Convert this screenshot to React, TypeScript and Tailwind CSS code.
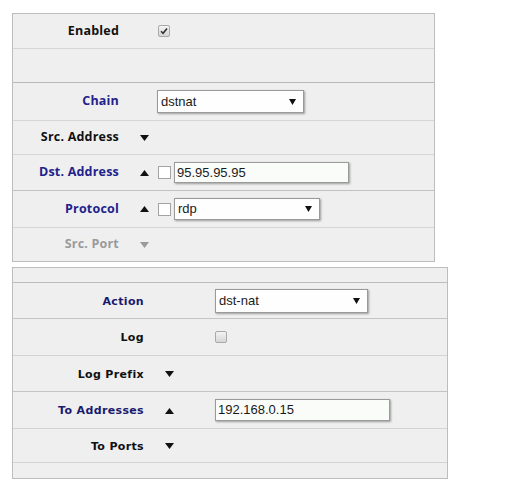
import React from 'react'

type Arrow = 'up' | 'down' | 'down-muted' | null

function Tri({ dir, muted }: { dir: 'up' | 'down'; muted?: boolean }) {
  const fill = muted ? '#9a9a9a' : '#111'
  return (
    <svg width="9" height="6" viewBox="0 0 9 6" className="block">
      {dir === 'down' ? (
        <polygon points="0,0 9,0 4.5,6" fill={fill} />
      ) : (
        <polygon points="0,6 9,6 4.5,0" fill={fill} />
      )}
    </svg>
  )
}

function Select({ value, w, h }: { value: string; w: string; h: string }) {
  return (
    <div
      className={`${w} ${h} flex items-center justify-between border border-[#9a9a9a] bg-[#fdfefd] pl-[3px] pr-[7px] text-[13px] text-[#1a1a1a] shadow-[1px_1px_2px_rgba(0,0,0,0.35)]`}
      style={{ fontFamily: '"Liberation Sans", Arial, sans-serif' }}
    >
      <span>{value}</span>
      <svg width="7" height="6" viewBox="0 0 7 6">
        <polygon points="0,0 7,0 3.5,6" fill="#111" />
      </svg>
    </div>
  )
}

function TextInput({ value, w, h }: { value: string; w: string; h: string }) {
  return (
    <div
      className={`${w} ${h} flex items-center border border-[#9a9a9a] bg-[#f9fcf9] pl-[2px] text-[13px] text-[#1a1a1a] shadow-[1px_1px_2px_rgba(0,0,0,0.35)]`}
      style={{ fontFamily: '"Liberation Sans", Arial, sans-serif' }}
    >
      {value}
    </div>
  )
}

function Box() {
  return <div className="h-[13px] w-[13px] border border-[#a3a3a3] bg-white" />
}

function GrayCheck({ checked }: { checked?: boolean }) {
  return (
    <div className="flex h-[12px] w-[12px] items-center justify-center rounded-[2px] border border-[#a9a9a9] bg-gradient-to-b from-[#f4f4f4] to-[#d6d6d6]">
      {checked && (
        <svg width="8" height="8" viewBox="0 0 8 8">
          <path d="M1 4.2 L3.1 6.3 L7 1.4" stroke="#333" strokeWidth="1.6" fill="none" />
        </svg>
      )}
    </div>
  )
}

function Row1({
  label,
  h,
  color = 'text-[#111]',
  arrow = null,
  line = 'border-[#d6d6d6]',
  last,
  children,
}: {
  label?: string
  h: string
  color?: string
  arrow?: Arrow
  line?: string
  last?: boolean
  children?: React.ReactNode
}) {
  return (
    <div className={`flex items-center ${h} ${last ? '' : `border-b ${line}`}`}>
      <div
        className={`w-[106px] text-right text-[12.5px] font-bold tracking-[0.2px] ${color}`}
        style={{ fontFamily: '"Open Sans", "DejaVu Sans", sans-serif' }}
      >
        {label}
      </div>
      <div className="flex w-[38px] justify-end pr-[8px]">
        {arrow === 'down' && <Tri dir="down" />}
        {arrow === 'up' && <Tri dir="up" />}
        {arrow === 'down-muted' && <Tri dir="down" muted />}
      </div>
      <div className="flex items-center">{children}</div>
    </div>
  )
}

function Row2({
  label,
  h,
  color = 'text-[#111]',
  arrow = null,
  line = 'border-[#cbcbcb]',
  last,
  children,
}: {
  label?: string
  h: string
  color?: string
  arrow?: Arrow
  line?: string
  last?: boolean
  children?: React.ReactNode
}) {
  return (
    <div className={`flex items-center ${h} ${last ? '' : `border-b ${line}`}`}>
      <div
        className={`w-[131px] pt-[3px] text-right text-[11px] font-bold tracking-[0.35px] ${color}`}
        style={{ fontFamily: '"DejaVu Sans", Verdana, sans-serif' }}
      >
        {label}
      </div>
      <div className="w-[21px]" />
      <div className="flex w-[50px] items-center pt-[1px]">
        {arrow === 'down' && <Tri dir="down" />}
        {arrow === 'up' && <Tri dir="up" />}
      </div>
      <div className="flex items-center">{children}</div>
    </div>
  )
}

export default function App() {
  const blue = 'text-[#22228c]'
  const navy = 'text-[#1a1a6e]'
  return (
    <div className="h-[501px] w-[524px] bg-white pl-[12px] pt-[13px]">
      <div className="w-[423px] border border-[#bdbdbd] bg-[#efefef]">
        <Row1 label="Enabled" h="h-[35px]">
          <div className="ml-px">
            <GrayCheck checked />
          </div>
        </Row1>
        <Row1 h="h-[34px]" line="border-[#b9b9b9]" />
        <Row1 label="Chain" h="h-[38px]" color={blue}>
          <Select value="dstnat" w="w-[147px]" h="h-[23px]" />
        </Row1>
        <Row1 label="Src. Address" h="h-[34px]" arrow="down" />
        <Row1 label="Dst. Address" h="h-[36px]" color={blue} arrow="up" line="border-[#c2c2c2]">
          <div className="ml-px mr-[3px]">
            <Box />
          </div>
          <TextInput value="95.95.95.95" w="w-[175px]" h="h-[21px]" />
        </Row1>
        <Row1 label="Protocol" h="h-[37px]" color={blue} arrow="up">
          <div className="ml-px mr-[3px]">
            <Box />
          </div>
          <Select value="rdp" w="w-[146px]" h="h-[22px]" />
        </Row1>
        <Row1 label="Src. Port" h="h-[33px]" color="text-[#9a9a9a]" arrow="down-muted" last />
      </div>

      <div className="mt-[5px] w-[436px] border border-[#bdbdbd] bg-[#efefef]">
        <Row2 h="h-[15px]" line="border-[#bcbcbc]" />
        <Row2 label="Action" h="h-[36px]" color={navy} line="border-[#c4c4c4]">
          <Select value="dst-nat" w="w-[153px]" h="h-[24px]" />
        </Row2>
        <Row2 label="Log" h="h-[37px]" line="border-[#d3d3d3]">
          <GrayCheck />
        </Row2>
        <Row2 label="Log Prefix" h="h-[36px]" arrow="down" line="border-[#c4c4c4]" />
        <Row2 label="To Addresses" h="h-[37px]" color={navy} arrow="up" line="border-[#d3d3d3]">
          <TextInput value="192.168.0.15" w="w-[175px]" h="h-[22px]" />
        </Row2>
        <Row2 label="To Ports" h="h-[34px]" arrow="down" line="border-[#d3d3d3]" />
        <Row2 h="h-[15px]" last />
      </div>
    </div>
  )
}
